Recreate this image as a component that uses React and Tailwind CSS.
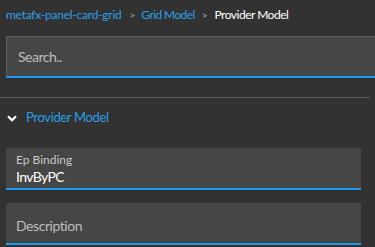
import React from "react";

export default function App() {
  return (
    <div className="w-[375px] h-[247px] overflow-hidden bg-[#323232] font-['Lato','Liberation_Sans',sans-serif] relative">
      <div className="flex items-center h-[30px] pl-[6px] text-[12px] leading-none">
        <span className="text-[#2a9fe8] tracking-[-0.25px]">metafx-panel-card-grid</span>
        <span className="text-[#b0b0b0] text-[10px] ml-[8px] mr-[6px]">&gt;</span>
        <span className="text-[#2a9fe8] tracking-[-0.6px]">Grid Model</span>
        <span className="text-[#b0b0b0] text-[10px] ml-[7px] mr-[7px]">&gt;</span>
        <span className="text-white tracking-[-0.5px]">Provider Model</span>
      </div>
      <div className="ml-[6px] mt-[6px] w-[380px] h-[42px] bg-[#464646] border-t border-l border-[#5c5c5c] border-b-2 border-b-[#1e9be8] flex items-center pl-[11px]">
        <span className="text-[#bdbdbd] text-[14px] tracking-[-0.5px]">Search..</span>
      </div>
      <div className="mt-[19px] w-[370px] h-px bg-[#5a5a5a]" />
      <div className="flex items-center h-[40px] pl-[7px]">
        <svg width="10" height="7" viewBox="0 0 10 7" className="mr-[9px]">
          <path d="M1 1.2 L5 5.2 L9 1.2" fill="none" stroke="white" strokeWidth="2.2" />
        </svg>
        <span className="text-[#2a9fe8] text-[13px] tracking-[-0.35px]">Provider Model</span>
      </div>
      <div className="ml-[6px] mt-[10px] w-[355px] h-[42px] bg-[#464646] border-b-2 border-[#1e9be8] flex flex-col pl-[10px] pt-[4px]">
        <span className="text-[#c8c8c8] text-[12px] leading-[16px]">Ep Binding</span>
        <span className="text-white text-[14px] leading-[18px] tracking-[-0.6px]">InvByPC</span>
      </div>
      <div className="ml-[6px] mt-[13px] w-[355px] h-[42px] bg-[#464646] border-b-2 border-[#1e9be8] flex items-center pl-[10px] pt-[4px]">
        <span className="text-[#bdbdbd] text-[14px] tracking-[-0.45px]">Description</span>
      </div>
    </div>
  );
}
